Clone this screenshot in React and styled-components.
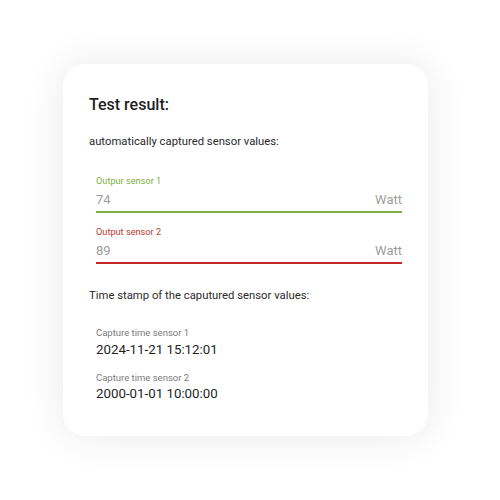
import React from "react";
import styled, { createGlobalStyle } from "styled-components";

const Global = createGlobalStyle`
  html, body { margin: 0; padding: 0; background: #ffffff; }
  body { font-family: Roboto, "Noto Sans", sans-serif; }
`;

const Page = styled.div`
  width: 500px;
  height: 500px;
  padding: 64px 0 0 63px;
  box-sizing: border-box;
`;

const Card = styled.div`
  width: 365px;
  height: 372px;
  box-sizing: border-box;
  background: #ffffff;
  border-radius: 22px;
  box-shadow: 0 0 40px rgba(0, 0, 0, 0.09);
  padding: 31px 26px 0 26px;
  display: flex;
  flex-direction: column;
`;

const Title = styled.h2`
  margin: 0;
  font-size: 16px;
  font-weight: 500;
  color: #1f1f1f;
  line-height: 20px;
`;

const Section = styled.p`
  margin: ${(p) => p.$mt}px 0 0 0;
  font-size: 11.3px;
  color: #2a2a2a;
  line-height: 14px;
`;

const Field = styled.div`
  margin: ${(p) => p.$mt}px 0 0 7px;
  display: flex;
  flex-direction: column;
`;

const FieldLabel = styled.div`
  font-size: 9.2px;
  line-height: 12px;
  color: ${(p) => p.$color};
`;

const InputRow = styled.div`
  display: flex;
  justify-content: space-between;
  align-items: baseline;
  margin-top: 5px;
  padding-bottom: 3px;
  border-bottom: 2px solid ${(p) => p.$color};
  font-size: 13px;
  line-height: 16px;
  color: #9e9e9e;
`;

const Stamp = styled.div`
  margin: ${(p) => p.$mt}px 0 0 7px;
  display: flex;
  flex-direction: column;
`;

const StampLabel = styled.div`
  font-size: 9.5px;
  line-height: 12px;
  color: #7a7a7a;
`;

const StampValue = styled.div`
  margin-top: 2.5px;
  font-size: 13.3px;
  line-height: 16px;
  color: #1f1f1f;
`;

export default function App() {
  return (
    <>
      <Global />
      <Page>
        <Card>
          <Title>Test result:</Title>
          <Section $mt={20}>automatically captured sensor values:</Section>
          <Field $mt={26}>
            <FieldLabel $color="#7cb342">Outpur sensor 1</FieldLabel>
            <InputRow $color="#7cb342">
              <span>74</span>
              <span>Watt</span>
            </InputRow>
          </Field>
          <Field $mt={13}>
            <FieldLabel $color="#c0392b">Output sensor 2</FieldLabel>
            <InputRow $color="#c62828">
              <span>89</span>
              <span>Watt</span>
            </InputRow>
          </Field>
          <Section $mt={25}>Time stamp of the caputured sensor values:</Section>
          <Stamp $mt={24}>
            <StampLabel>Capture time sensor 1</StampLabel>
            <StampValue>2024-11-21 15:12:01</StampValue>
          </Stamp>
          <Stamp $mt={14}>
            <StampLabel>Capture time sensor 2</StampLabel>
            <StampValue>2000-01-01 10:00:00</StampValue>
          </Stamp>
        </Card>
      </Page>
    </>
  );
}
